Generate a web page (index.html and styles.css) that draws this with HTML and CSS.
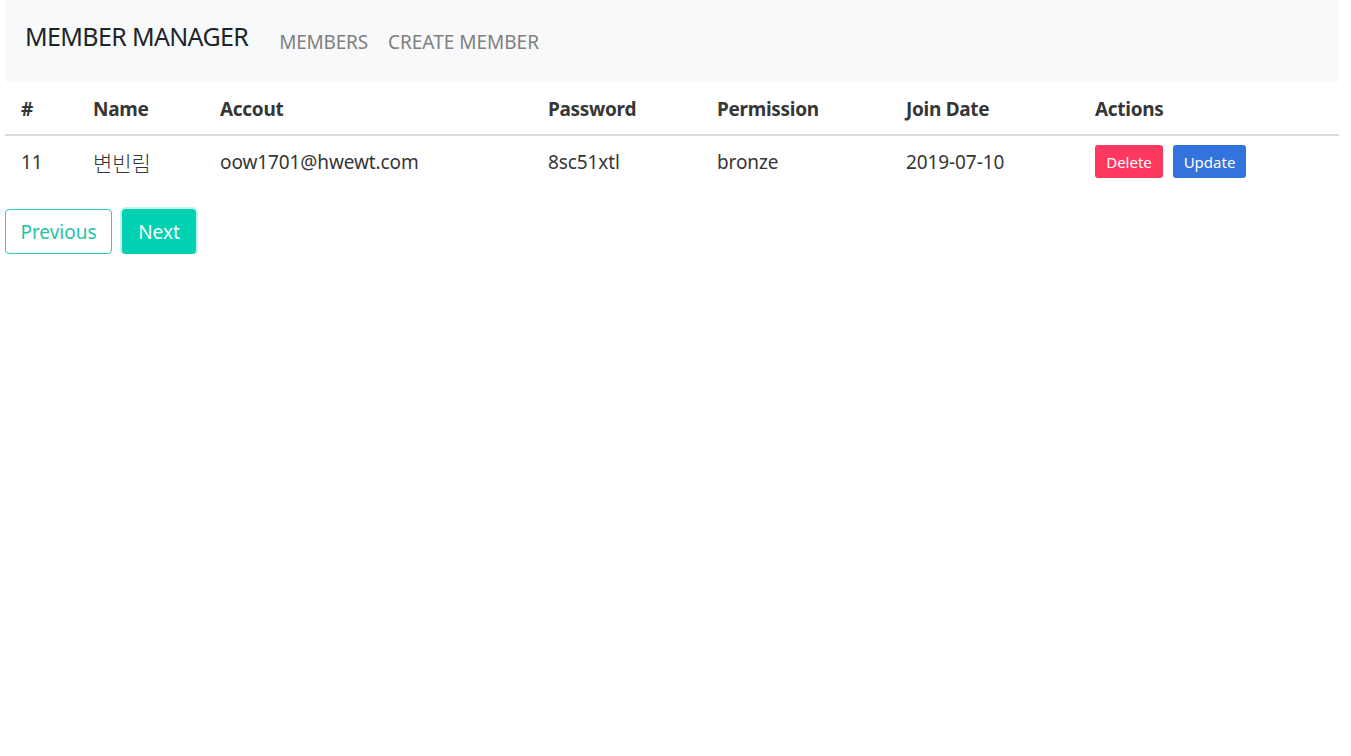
FILE: index.html
```html
<!DOCTYPE html>
<html lang="ko">
<head>
<meta charset="utf-8">
<title>Member Manager</title>
<link rel="stylesheet" href="styles.css">
</head>
<body>
<div class="page">
  <nav class="navbar">
    <span class="brand">MEMBER MANAGER</span>
    <a class="nav-link" href="#">MEMBERS</a>
    <a class="nav-link" href="#">CREATE MEMBER</a>
  </nav>
  <table class="table">
    <colgroup>
      <col class="c-id"><col class="c-name"><col class="c-acc"><col class="c-pw"><col class="c-perm"><col class="c-date"><col class="c-act">
    </colgroup>
    <thead>
      <tr><th>#</th><th>Name</th><th>Accout</th><th>Password</th><th>Permission</th><th>Join Date</th><th>Actions</th></tr>
    </thead>
    <tbody>
      <tr>
        <td>11</td><td class="ko">변빈림</td><td>oow1701@hwewt.com</td><td>8sc51xtl</td><td>bronze</td><td>2019-07-10</td>
        <td><div class="actions"><button class="btn-sm danger">Delete</button><button class="btn-sm link">Update</button></div></td>
      </tr>
    </tbody>
  </table>
  <div class="pagination">
    <button class="pg prev">Previous</button>
    <button class="pg next">Next</button>
  </div>
</div>
</body>
</html>
```
FILE: styles.css
```css
html, body { margin: 0; padding: 0; background: #fff; }
body { font-family: "Noto Sans", "Noto Sans CJK KR", sans-serif; color: #363636; }
.page { padding: 0 12px 0 5px; }
.navbar {
  height: 82px; background: #f8f9fa; display: flex; align-items: flex-start;
  padding: 0 0 0 20px; box-sizing: border-box;
}
.brand { font-size: 25px; color: #212529; margin-top: 19px; margin-right: 31px; letter-spacing: -0.65px; }
.nav-link { font-size: 19px; color: #7f7f7f; text-decoration: none; margin-top: 29px; letter-spacing: -0.2px; }
.nav-link + .nav-link { margin-left: 20px; letter-spacing: 0; }
.table { width: 100%; border-collapse: collapse; table-layout: fixed; font-size: 19px; }
.c-id { width: 72px; } .c-name { width: 127px; } .c-acc { width: 328px; } .c-pw { width: 169px; }
.c-perm { width: 189px; } .c-date { width: 189px; } .c-act { width: auto; }
.table th { text-align: left; font-weight: 700; color: #363636; height: 53px; padding: 2px 0 0 16px; box-sizing: border-box; border-bottom: 2px solid #dbdbdb; letter-spacing: -0.3px; }
.table td { height: 54px; padding: 0 0 2px 16px; box-sizing: border-box; letter-spacing: -0.1px; }
.ko { font-family: "Noto Sans CJK KR", sans-serif; font-size: 21px; font-weight: 300; letter-spacing: 1.2px; }
.actions { display: flex; gap: 10px; }
.btn-sm { font-family: inherit; font-size: 15px; color: #fff; border: 0; border-radius: 3px; height: 33px; padding: 0; }
.danger { background: #ff3860; width: 68px; }
.link { background: #3273dc; width: 73px; }
.pagination { display: flex; gap: 10px; margin-top: 20px; }
.pg { font-family: inherit; font-size: 19px; height: 45px; border-radius: 4px; box-sizing: border-box; padding: 0; }
.prev { background: #fff; border: 1px solid #2ad1b8; color: #1fc4a8; width: 107px; }
.next { background: #00d1b2; border: 1px solid transparent; color: #fff; width: 74px; box-shadow: 0 0 0 2px rgba(0,209,178,.25); }
```
